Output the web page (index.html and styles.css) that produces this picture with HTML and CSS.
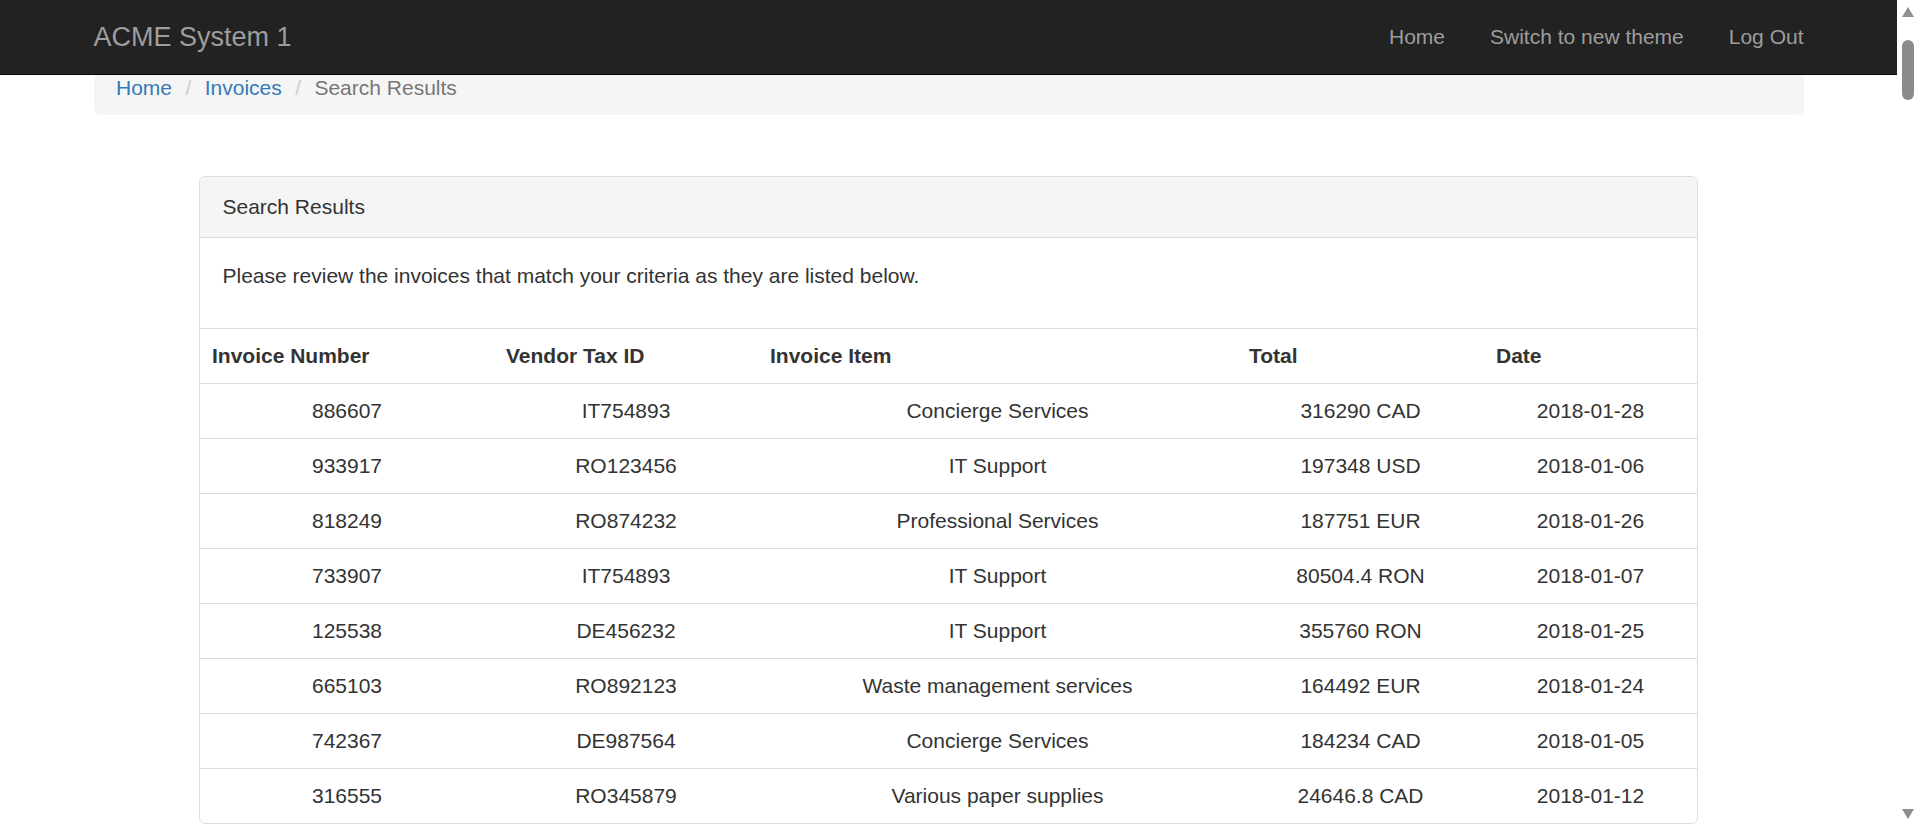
FILE: index.html
```html
<!DOCTYPE html>
<html lang="en">
<head>
<meta charset="utf-8">
<title>ACME System 1 - Search Results</title>
<link rel="stylesheet" href="styles.css">
</head>
<body>
<nav class="navbar">
  <div class="container navbar-inner">
    <a class="brand" href="#">ACME System 1</a>
    <ul class="nav-links">
      <li><a href="#">Home</a></li>
      <li><a href="#">Switch to new theme</a></li>
      <li><a href="#">Log Out</a></li>
    </ul>
  </div>
</nav>
<main class="container page">
  <ol class="breadcrumb">
    <li><a href="#">Home</a></li>
    <li><a href="#">Invoices</a></li>
    <li class="active">Search Results</li>
  </ol>
  <section class="panel">
    <div class="panel-heading">Search Results</div>
    <div class="panel-body">
      <p>Please review the invoices that match your criteria as they are listed below.</p>
    </div>
    <table class="table">
      <colgroup>
        <col class="c1"><col class="c2"><col class="c3"><col class="c4"><col class="c5">
      </colgroup>
      <thead>
        <tr><th>Invoice Number</th><th>Vendor Tax ID</th><th>Invoice Item</th><th>Total</th><th>Date</th></tr>
      </thead>
      <tbody>
        <tr><td>886607</td><td>IT754893</td><td>Concierge Services</td><td>316290 CAD</td><td>2018-01-28</td></tr>
        <tr><td>933917</td><td>RO123456</td><td>IT Support</td><td>197348 USD</td><td>2018-01-06</td></tr>
        <tr><td>818249</td><td>RO874232</td><td>Professional Services</td><td>187751 EUR</td><td>2018-01-26</td></tr>
        <tr><td>733907</td><td>IT754893</td><td>IT Support</td><td>80504.4 RON</td><td>2018-01-07</td></tr>
        <tr><td>125538</td><td>DE456232</td><td>IT Support</td><td>355760 RON</td><td>2018-01-25</td></tr>
        <tr><td>665103</td><td>RO892123</td><td>Waste management services</td><td>164492 EUR</td><td>2018-01-24</td></tr>
        <tr><td>742367</td><td>DE987564</td><td>Concierge Services</td><td>184234 CAD</td><td>2018-01-05</td></tr>
        <tr><td>316555</td><td>RO345879</td><td>Various paper supplies</td><td>24646.8 CAD</td><td>2018-01-12</td></tr>
      </tbody>
    </table>
  </section>
</main>
<div class="scrollbar" aria-hidden="true">
  <span class="sb-arrow sb-up"></span>
  <span class="sb-thumb"></span>
  <span class="sb-arrow sb-down"></span>
</div>
</body>
</html>
```
FILE: styles.css
```css
* { box-sizing: border-box; }

html, body { margin: 0; padding: 0; }

body {
  font-family: "Liberation Sans", Arial, Helvetica, sans-serif;
  font-size: 21px;
  line-height: 30px;
  color: #333;
  background: #fff;
  padding-top: 61px;
  margin-right: 23px;
}

a { text-decoration: none; }

.container {
  width: 1755px;
  margin: 0 auto;
  padding: 0 22.5px;
}

.navbar {
  position: fixed;
  top: 0;
  left: 0;
  right: 23px;
  height: 75px;
  background: #222;
  border-bottom: 1px solid #080808;
  z-index: 10;
}

.navbar-inner {
  display: flex;
  align-items: center;
  justify-content: space-between;
  height: 74px;
}

.brand {
  font-size: 27px;
  line-height: 30px;
  color: #9d9d9d;
}

.nav-links {
  display: flex;
  list-style: none;
  margin: 0 -22.5px 0 0;
  padding: 0;
}

.nav-links a {
  display: block;
  padding: 0 22.5px;
  color: #9d9d9d;
  font-size: 21px;
  line-height: 30px;
}

.breadcrumb {
  display: flex;
  list-style: none;
  margin: 0 0 61px;
  padding: 12px 22.5px;
  background: #f5f5f5;
  border-radius: 6px;
}

.breadcrumb li + li::before {
  content: "/\00a0";
  color: #ccc;
  padding: 0 7.5px 0 13.5px;
}

.breadcrumb a { color: #337ab7; }
.breadcrumb .active { color: #777; }

.panel {
  width: 1499px;
  margin: 0 auto 30px;
  border: 1px solid #ddd;
  border-radius: 6px;
  background: #fff;
  overflow: hidden;
}

.panel-heading {
  padding: 15px 22.5px;
  background: #f5f5f5;
  border-bottom: 1px solid #ddd;
  color: #333;
}

.panel-body {
  padding: 22.5px;
}

.panel-body p {
  margin: 0 0 15px;
}

.table {
  width: 100%;
  border-collapse: collapse;
  table-layout: fixed;
}

.c1 { width: 294px; }
.c2 { width: 264px; }
.c3 { width: 479px; }
.c4 { width: 247px; }
.c5 { width: 213px; }

.table th,
.table td {
  padding: 12px;
  line-height: 30px;
  border-top: 1px solid #ddd;
  white-space: nowrap;
}

.table th {
  text-align: left;
  font-weight: bold;
}

.table td {
  text-align: center;
}

.scrollbar {
  position: fixed;
  top: 0;
  right: 0;
  bottom: 0;
  width: 23px;
  background: #fff;
  z-index: 20;
}

.sb-arrow {
  position: absolute;
  left: 5px;
  width: 0;
  height: 0;
  border-left: 6.5px solid transparent;
  border-right: 6.5px solid transparent;
}

.sb-up {
  top: 7px;
  border-bottom: 10px solid #909090;
}

.sb-down {
  bottom: 8px;
  border-top: 10px solid #909090;
}

.sb-thumb {
  position: absolute;
  top: 40px;
  left: 5px;
  width: 12px;
  height: 60px;
  border-radius: 6px;
  background: #8c8c8c;
}
```
